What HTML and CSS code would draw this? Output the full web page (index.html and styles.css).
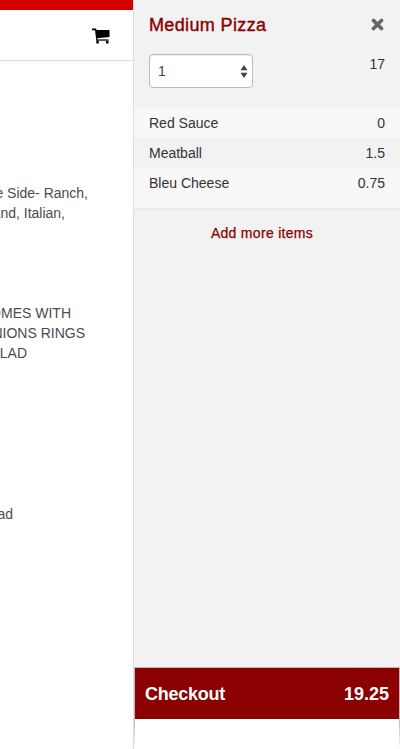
FILE: index.html
```html
<!DOCTYPE html>
<html lang="en">
<head>
<meta charset="utf-8">
<title>Your order</title>
<link rel="stylesheet" href="styles.css">
</head>
<body>
<div class="app">
  <main class="menu">
    <div class="brand-bar"></div>
    <header class="toolbar">
      <svg class="cart-icon" viewBox="0 0 18 16" aria-label="Cart">
        <path d="M0 .5h4l.7 1.5H17.5v7L5.3 10.3l.3 1.2H16.5V15.6H14V13H6.8v2.6H4.3v-3L3 2.2H0z" fill="#000"/>
        <path d="M5.5 11.4h10.5v1.6H5.5z" fill="#555"/>
      </svg>
    </header>
    <p class="desc dressings"><span class="line w88">e Side- Ranch,</span><span class="line w65">and, Italian,</span></p>
    <p class="desc sides"><span class="line w71">OMES WITH</span><span class="line w86">NIONS RINGS</span><span class="line w27">ALAD</span></p>
    <p class="desc salad"><span class="line w13">ad</span></p>
  </main>
  <aside class="order">
    <section class="item">
      <div class="item-head">
        <h4 class="item-name">Medium Pizza</h4>
        <svg class="close" viewBox="0 0 13 13" aria-label="Remove"><path d="M2.5 2.5l8 8M10.5 2.5l-8 8" stroke="#666" stroke-width="3.7" stroke-linecap="round"/></svg>
      </div>
      <div class="item-qty">
        <div class="select"><span>1</span><svg class="arrows" viewBox="0 0 8 13"><path d="M4 0l3.5 5.3h-7zM4 13L.5 7.7h7z" fill="#444"/></svg></div>
        <span class="price">17</span>
      </div>
      <ul class="toppings">
        <li><span>Red Sauce</span><span>0</span></li>
        <li><span>Meatball</span><span>1.5</span></li>
        <li><span>Bleu Cheese</span><span>0.75</span></li>
      </ul>
    </section>
    <a class="add">Add more items</a>
    <footer class="foot">
      <div class="checkout"><span class="checkout-label">Checkout</span><span>19.25</span></div>
      <div class="foot-space"></div>
    </footer>
  </aside>
</div>
</body>
</html>
```
FILE: styles.css
```css
* { box-sizing: border-box; }
body {
  margin: 0;
  font: 14px/20px "Liberation Sans", Arial, sans-serif;
  color: #333;
  background: #fff;
}
.app { display: flex; width: 400px; height: 749px; overflow: hidden; }
.menu { width: 133px; height: 749px; overflow: hidden; }
.brand-bar { height: 10px; background: #d40000; }
.toolbar {
  height: 51px;
  border-bottom: 1px solid #ddd;
  display: flex;
  justify-content: flex-end;
  padding: 18px 23px 0 0;
}
.cart-icon { width: 18px; height: 16px; }
.desc { margin: 0; color: #4c4c4c; }
.dressings { padding-top: 122px; }
.sides { padding-top: 80px; }
.salad { padding-top: 141px; }
.line { display: flex; justify-content: flex-end; white-space: nowrap; }
.w88 { width: 88px; }
.w65 { width: 65px; }
.w71 { width: 71px; }
.w86 { width: 85px; }
.w27 { width: 27px; }
.w13 { width: 13px; }

.order {
  width: 267px;
  display: flex;
  flex-direction: column;
  background: #f2f2f2;
  border-left: 1px solid #ddd;
}
.item { border-bottom: 2px solid #e9e9e9; }
.item-head {
  display: flex;
  justify-content: space-between;
  padding: 15px 15px 0;
  height: 54px;
}
.item-name {
  margin: 0;
  font-size: 18px;
  font-weight: 400;
  letter-spacing: .36px;
  color: #8b0000;
  -webkit-text-stroke: .4px #8b0000;
}
.close { width: 13px; height: 13px; margin: 3px 1px 0 0; }
.item-qty {
  display: flex;
  justify-content: space-between;
  padding: 0 15px;
  height: 54px;
}
.select {
  width: 104px;
  height: 34px;
  display: flex;
  align-items: center;
  justify-content: space-between;
  padding: 0 4px 0 8px;
  color: #444;
  background: #fff;
  border: 1px solid #bbb;
  border-radius: 4px;
  box-shadow: inset 0 1px 1px rgba(0, 0, 0, .075);
}
.arrows { width: 8px; height: 13px; }
.toppings { list-style: none; margin: 0; padding: 0; background: #f8f8f8; height: 100px; }
.toppings li {
  display: flex;
  justify-content: space-between;
  height: 30px;
  padding: 5px 15px;
}
.toppings li:nth-child(even) { background: #f2f2f2; }
.add {
  margin-top: 13px;
  padding-right: 10px;
  text-align: center;
  color: #8b0000;
  letter-spacing: .3px;
  -webkit-text-stroke: .25px #8b0000;
}
.foot { margin-top: auto; height: 82px; padding: 0 1px; background: linear-gradient(#b8b8b8 52px, #fff 82px); }
.checkout {
  height: 52px;
  border-top: 1px solid #bbb;
  background: #8b0000;
  color: #fff;
  font-size: 18px;
  font-weight: 700;
  display: flex;
  align-items: center;
  justify-content: space-between;
  padding: 0 10px;
}
.checkout-label { letter-spacing: -.25px; }
.foot-space { height: 30px; background: #fff; }
```
